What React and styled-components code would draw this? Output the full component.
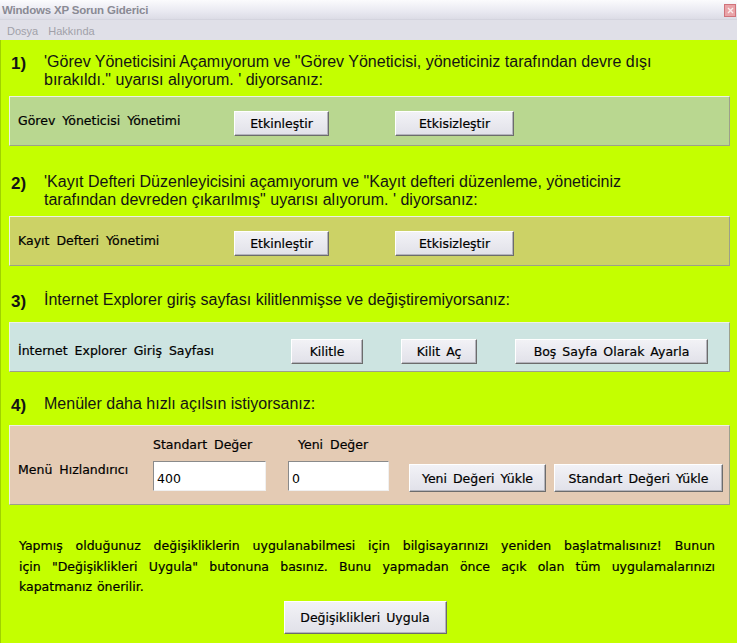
import React from 'react';
import styled, { createGlobalStyle } from 'styled-components';

const Global = createGlobalStyle`
  html, body { margin: 0; padding: 0; }
  body { width: 737px; height: 643px; overflow: hidden; background: #c4ff00; }
`;

const comic = `"DejaVu Sans", "Liberation Sans", sans-serif`;

const Window = styled.div`
  width: 737px;
  height: 643px;
  display: flex;
  flex-direction: column;
  background: #c4ff00;
  font-family: "Liberation Sans", Arial, sans-serif;
`;

const TitleBar = styled.div`
  height: 20px;
  display: flex;
  align-items: center;
  justify-content: space-between;
  padding: 0 1px 0 2px;
  background: linear-gradient(#fbfbfd, #e9e9f1 60%, #dcdce6);
  border-bottom: 1px solid #d4d4de;
  box-sizing: border-box;
`;

const Title = styled.span`
  font-size: 11.5px;
  font-weight: bold;
  color: #8a8a94;
  letter-spacing: -0.2px;
`;

const CloseBox = styled.div`
  width: 10px;
  height: 11px;
  margin-top: 2px;
  background: #e9a3a8;
  border: 1px solid #d0727a;
  display: flex;
  align-items: center;
  justify-content: center;
`;

const MenuBar = styled.div`
  height: 20px;
  display: flex;
  align-items: center;
  gap: 10px;
  padding: 1px 0 0 7px;
  box-sizing: border-box;
  background: #e0e0e8;
  font-size: 11px;
  color: #a0a0a8;
`;

const Content = styled.div`
  flex: 1;
  padding: 0 8px 0 8px;
  border-left: 1px solid #9fd200;
`;

const Section = styled.div`
  margin-top: ${p => p.$top}px;
`;

const Heading = styled.div`
  display: flex;
  align-items: flex-start;
  margin-bottom: ${p => p.$below}px;
  color: #141414;
`;

const Num = styled.span`
  width: 33px;
  padding-left: 2px;
  font-size: 17px;
  font-weight: bold;
  line-height: 19px;
  padding-top: 1px;
`;

const HeadText = styled.div`
  font-size: 16px;
  line-height: 18px;
  flex: 1;
`;

const Panel = styled.div`
  width: 721px;
  height: ${p => p.$h}px;
  box-sizing: border-box;
  background: ${p => p.$bg};
  border: 1px solid #9ca08a;
  border-top-color: #eef0e6;
  border-left-color: #eef0e6;
  display: flex;
  align-items: ${p => p.$align || 'center'};
  padding: ${p => p.$pt || 0}px 0 0 8px;
`;

const Label = styled.span`
  width: ${p => p.$w}px;
  font-family: ${comic};
  font-size: 12.5px;
  color: #000;
  -webkit-text-stroke: 0.2px #000;
  word-spacing: 3px;
  margin-top: ${p => p.$dy || 0}px;
  flex-shrink: 0;
`;

const Buttons = styled.div`
  display: flex;
  align-items: center;
  gap: ${p => p.$gap}px;
  margin-top: ${p => p.$dy || 0}px;
  margin-left: ${p => p.$ml || 0}px;
`;

const Button = styled.button`
  width: ${p => p.$w}px;
  height: ${p => p.$h || 25}px;
  padding: 0;
  background: linear-gradient(#f2f2f6, #e1e1e9);
  border: 1px solid;
  border-color: #ffffff #6c6c6c #6c6c6c #ffffff;
  box-shadow: inset -1px -1px 0 #b4b4bc;
  font-family: ${comic};
  font-size: 12.5px;
  color: #000;
  -webkit-text-stroke: 0.2px #000;
  word-spacing: 2px;
  flex-shrink: 0;
`;

const Field = styled.div`
  display: flex;
  flex-direction: column;
  gap: 8px;
  margin-left: ${p => p.$ml || 0}px;
`;

const FieldLabel = styled.span`
  font-family: ${comic};
  font-size: 12.5px;
  line-height: 16px;
  color: #000;
  -webkit-text-stroke: 0.2px #000;
  word-spacing: 3px;
  padding-left: ${p => p.$pl || 0}px;
`;

const Input = styled.input`
  width: ${p => p.$w}px;
  height: 30px;
  box-sizing: border-box;
  border: 1px solid;
  border-color: #8a8a8a #f0f0f0 #f0f0f0 #8a8a8a;
  background: #fff;
  font-family: ${comic};
  font-size: 12.5px;
  padding: 4px 3px 0;
  color: #000;
  outline: none;
`;

const Para = styled.div`
  margin-top: 31px;
  padding-left: 10px;
  width: 696px;
  font-family: ${comic};
  font-size: 12.5px;
  line-height: 20.5px;
  color: #000;
  -webkit-text-stroke: 0.2px #000;
  word-spacing: 1px;
`;

const Line = styled.div`
  text-align: justify;
  text-align-last: ${p => (p.$justify ? 'justify' : 'left')};
`;

const Footer = styled.div`
  display: flex;
  justify-content: center;
  margin-top: 3px;
  padding-right: 8px;
`;

export default function App() {
  return (
    <Window>
      <Global />
      <TitleBar>
        <Title>Windows XP Sorun Giderici</Title>
        <CloseBox>
          <svg width="7" height="7" viewBox="0 0 7 7">
            <path d="M1 1L6 6M6 1L1 6" stroke="#fff" strokeWidth="1.4" opacity="0.8" />
          </svg>
        </CloseBox>
      </TitleBar>
      <MenuBar>
        <span>Dosya</span>
        <span>Hakkında</span>
      </MenuBar>
      <Content>
        <Section $top={13}>
          <Heading $below={7}>
            <Num>1)</Num>
            <HeadText>
              'Görev Yöneticisini Açamıyorum ve "Görev Yöneticisi, yöneticiniz tarafından devre dışı
              <br />
              bırakıldı." uyarısı alıyorum. ' diyorsanız:
            </HeadText>
          </Heading>
          <Panel $bg="#b9d790" $h={50}>
            <Label $w={216} $dy={-2}>Görev Yöneticisi Yönetimi</Label>
            <Buttons $gap={66} $dy={5}>
              <Button $w={95}>Etkinleştir</Button>
              <Button $w={119}>Etkisizleştir</Button>
            </Buttons>
          </Panel>
        </Section>
        <Section $top={27}>
          <Heading $below={7}>
            <Num>2)</Num>
            <HeadText>
              'Kayıt Defteri Düzenleyicisini açamıyorum ve "Kayıt defteri düzenleme, yöneticiniz
              <br />
              tarafından devreden çıkarılmış" uyarısı alıyorum. ' diyorsanız:
            </HeadText>
          </Heading>
          <Panel $bg="#ccd266" $h={50}>
            <Label $w={216} $dy={-2}>Kayıt Defteri Yönetimi</Label>
            <Buttons $gap={66} $dy={5}>
              <Button $w={95}>Etkinleştir</Button>
              <Button $w={119}>Etkisizleştir</Button>
            </Buttons>
          </Panel>
        </Section>
        <Section $top={25}>
          <Heading $below={11}>
            <Num>3)</Num>
            <HeadText>İnternet Explorer giriş sayfası kilitlenmişse ve değiştiremiyorsanız:</HeadText>
          </Heading>
          <Panel $bg="#cde4e1" $h={50}>
            <Label $w={273} $dy={7}>İnternet Explorer Giriş Sayfası</Label>
            <Buttons $gap={38} $dy={8}>
              <Button $w={72}>Kilitle</Button>
              <Button $w={76}>Kilit Aç</Button>
              <Button $w={193}>Boş Sayfa Olarak Ayarla</Button>
            </Buttons>
          </Panel>
        </Section>
        <Section $top={23}>
          <Heading $below={10}>
            <Num>4)</Num>
            <HeadText>Menüler daha hızlı açılsın istiyorsanız:</HeadText>
          </Heading>
          <Panel $bg="#e4cbb4" $h={80} $align="flex-start" $pt={11}>
            <Label $w={135} $dy={25}>Menü Hızlandırıcı</Label>
            <Field>
              <FieldLabel>Standart Değer</FieldLabel>
              <Input $w={113} defaultValue="400" />
            </Field>
            <Field $ml={22}>
              <FieldLabel $pl={10}>Yeni Değer</FieldLabel>
              <Input $w={101} defaultValue="0" />
            </Field>
            <Buttons $gap={8} $dy={27} $ml={20}>
              <Button $w={137} $h={28}>Yeni Değeri Yükle</Button>
              <Button $w={169} $h={28}>Standart Değeri Yükle</Button>
            </Buttons>
          </Panel>
        </Section>
        <Para>
          <Line $justify>Yapmış olduğunuz değişikliklerin uygulanabilmesi için bilgisayarınızı yeniden başlatmalısınız! Bunun</Line>
          <Line $justify>için "Değişiklikleri Uygula" butonuna basınız. Bunu yapmadan önce açık olan tüm uygulamalarınızı</Line>
          <Line>kapatmanız önerilir.</Line>
        </Para>
        <Footer>
          <Button $w={163} $h={33}>Değişiklikleri Uygula</Button>
        </Footer>
      </Content>
    </Window>
  );
}
